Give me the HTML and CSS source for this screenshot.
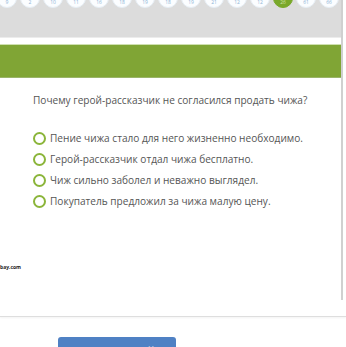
FILE: index.html
```html
<!DOCTYPE html>
<html lang="ru">
<head>
  <meta charset="UTF-8" />
  <title>Тест</title>
  <link rel="stylesheet" href="styles.css">
</head>
<body>
  <div class="page">
    <div class="panel">
      <div class="steps-bar">
        <div class="steps">
          <span class="step">9</span>
          <span class="step">2</span>
          <span class="step">10</span>
          <span class="step">11</span>
          <span class="step">16</span>
          <span class="step">18</span>
          <span class="step">19</span>
          <span class="step">18</span>
          <span class="step">19</span>
          <span class="step">21</span>
          <span class="step">12</span>
          <span class="step">12</span>
          <span class="step current">26</span>
          <span class="step">61</span>
          <span class="step">66</span>
        </div>
      </div>
      <div class="green-band"></div>
      <div class="question">
        <p class="question-text">Почему герой-рассказчик не согласился продать чижа?</p>
        <ul class="answers">
          <li><span class="radio"></span>Пение чижа стало для него жизненно необходимо.</li>
          <li><span class="radio"></span>Герой-рассказчик отдал чижа бесплатно.</li>
          <li><span class="radio"></span>Чиж сильно заболел и неважно выглядел.</li>
          <li><span class="radio"></span>Покупатель предложил за чижа малую цену.</li>
        </ul>
      </div>
      <div class="source">bay.com</div>
    </div>
    <div class="footer-line"></div>
    <div class="actions">
      <button class="next-button">Следующий вопрос</button>
    </div>
  </div>
</body>
</html>
```
FILE: styles.css
```css
html, body {
  margin: 0;
  padding: 0;
  background: #fff;
  font-family: 'Open Sans', 'Noto Sans', sans-serif;
  overflow: hidden;
}

.page { width: 346px; height: 347px; overflow: hidden; }

.panel { width: 341px; height: 300px; border-right: 2px solid #d0d0d0; display: flex; flex-direction: column; }

.steps-bar { height: 37px; background: #dcdcdc; border-bottom: 1px solid #ececec; overflow: hidden; }
.steps { display: flex; gap: 3px; margin: -12px 0 0 -3px; }
.step { flex: none; width: 20px; height: 20px; border-radius: 50%; background: #fbfdff; border: 1px solid #e6eef5; color: #8db3d6; font-size: 5px; line-height: 6px; display: flex; align-items: flex-end; justify-content: center; padding-bottom: 2px; box-sizing: border-box; }
.step.current { background: #79a82a; border-color: #79a82a; color: #cfe3a8; }

.green-band { height: 32px; margin-top: 6px; background: #80a535; border-top: 1px solid #cfe0b0; border-bottom: 1px solid #9ab46a; }

.question { padding: 0 0 0 33px; color: #555; font-size: 10.1px; }
.question-text { margin: 14px 0 22px 0; line-height: 16px; }

.answers { list-style: none; margin: 0; padding: 0; display: flex; flex-direction: column; gap: 5px; }
.answers li { display: flex; align-items: center; height: 16px; }
.radio { width: 13px; height: 13px; box-sizing: border-box; border: 2px solid #8bb53a; border-radius: 50%; margin-right: 4px; flex: none; }

.source { margin-top: 55px; font-size: 5px; font-weight: bold; color: #222; }

.footer-line { height: 16px; border-bottom: 1px solid #dedede; box-shadow: 0 1px 2px rgba(0,0,0,0.05); }

.actions { padding: 20px 0 0 58px; }
.next-button { width: 118px; height: 30px; background: #4f81c4; color: #fff; border: none; border-radius: 3px; font-family: inherit; font-size: 13px; padding: 5px 0 0 0; text-align: center; display: flex; justify-content: center; align-items: flex-start; }
```
